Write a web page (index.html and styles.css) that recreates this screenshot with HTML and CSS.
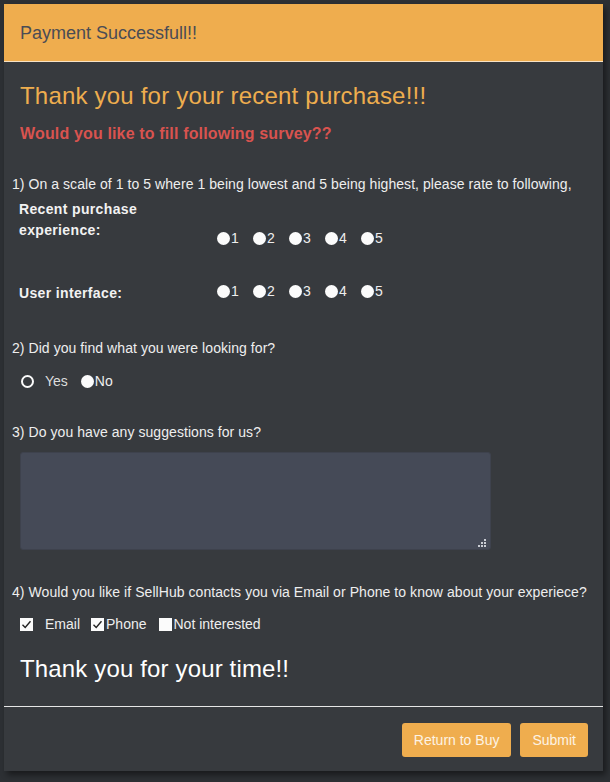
FILE: index.html
```html
<!DOCTYPE html>
<html>
<head>
<meta charset="utf-8">
<link rel="stylesheet" href="styles.css">
</head>
<body>
<div class="modal">
  <div class="modal-header">Payment Successfull!!</div>
  <div class="modal-body">
    <h2 class="thanks">Thank you for your recent purchase!!!</h2>
    <h3 class="survey">Would you like to fill following survey??</h3>

    <p class="q q1">1) On a scale of 1 to 5 where 1 being lowest and 5 being highest, please rate to following,</p>
    <div class="rate-row row-a">
      <div class="rate-label">Recent purchase<br>experience:</div>
      <div class="opts">
        <span class="opt"><span class="dot"></span>1</span>
        <span class="opt"><span class="dot"></span>2</span>
        <span class="opt"><span class="dot"></span>3</span>
        <span class="opt"><span class="dot"></span>4</span>
        <span class="opt"><span class="dot"></span>5</span>
      </div>
    </div>
    <div class="rate-row row-b">
      <div class="rate-label">User interface:</div>
      <div class="opts">
        <span class="opt"><span class="dot"></span>1</span>
        <span class="opt"><span class="dot"></span>2</span>
        <span class="opt"><span class="dot"></span>3</span>
        <span class="opt"><span class="dot"></span>4</span>
        <span class="opt"><span class="dot"></span>5</span>
      </div>
    </div>

    <p class="q q2">2) Did you find what you were looking for?</p>
    <div class="yesno">
      <span class="ring"></span><span class="yes">Yes</span>
      <span class="dot"></span><span>No</span>
    </div>

    <p class="q q3">3) Do you have any suggestions for us?</p>
    <div class="ta">
      <svg class="grip" width="10" height="10" viewBox="0 0 10 10"><g fill="#c9ccd3"><rect x="7" y="1" width="2" height="2"/><rect x="4" y="4" width="2" height="2"/><rect x="7" y="4" width="2" height="2"/><rect x="1" y="7" width="2" height="2"/><rect x="4" y="7" width="2" height="2"/><rect x="7" y="7" width="2" height="2"/></g></svg>
    </div>

    <p class="q q4">4) Would you like if SellHub contacts you via Email or Phone to know about your experiece?</p>
    <div class="checks">
      <span class="box"><svg width="13" height="13" viewBox="0 0 13 13"><path d="M2.5 6.8 L5.2 9.5 L10.5 3.2" fill="none" stroke="#222" stroke-width="1.4"/></svg></span><span class="email">Email</span>
      <span class="box"><svg width="13" height="13" viewBox="0 0 13 13"><path d="M2.5 6.8 L5.2 9.5 L10.5 3.2" fill="none" stroke="#222" stroke-width="1.4"/></svg></span><span class="phone">Phone</span>
      <span class="box"></span><span>Not interested</span>
    </div>

    <h2 class="time">Thank you for your time!!</h2>
  </div>
  <div class="modal-footer">
    <button class="btn">Return to Buy</button>
    <button class="btn">Submit</button>
  </div>
</div>
</body>
</html>
```
FILE: styles.css
```css
html, body {
  margin: 0;
  padding: 0;
}
body {
  background: #2d3034;
  font-family: "Liberation Sans", Arial, sans-serif;
  height: 782px;
  overflow: hidden;
}
.modal {
  margin: 4px 0 0 4px;
  width: 599px;
  height: 767px;
  background: #373a3e;
  box-shadow: 3px 4px 6px rgba(0,0,0,0.45);
  display: flex;
  flex-direction: column;
}
.modal-header {
  background: #efad4e;
  border-bottom: 1px solid #f7e2c4;
  padding-left: 16px;
  padding-top: 2px;
  box-sizing: border-box;
  height: 58px;
  display: flex;
  align-items: center;
  font-size: 18px;
  color: #4a4c55;
}
.modal-body {
  padding: 0 0 0 8px;
  flex: 1;
  border-bottom: 1px solid #e6e6e6;
}
.thanks {
  margin: 19px 0 0 8px;
  font-size: 24px;
  font-weight: normal;
  color: #eead4e;
  line-height: 30px;
  letter-spacing: 0.2px;
}
.survey {
  margin: 13px 0 0 8px;
  font-size: 16px;
  font-weight: bold;
  color: #d9534f;
  line-height: 20px;
  letter-spacing: 0.15px;
}
.q {
  margin: 0;
  font-size: 14px;
  color: #eeeeee;
  line-height: 18px;
  letter-spacing: 0.06px;
}
.q1 { margin-top: 31px; }
.rate-row {
  display: flex;
  align-items: flex-end;
  margin-left: 7px;
}
.row-a { margin-top: 6px; }
.row-b { margin-top: 39px; }
.rate-label {
  width: 198px;
  font-size: 14px;
  font-weight: bold;
  color: #f2f2f2;
  line-height: 21px;
  letter-spacing: 0.35px;
}
.row-a .rate-label { padding-bottom: 2px; }
.opts {
  display: flex;
  gap: 10px;
  font-size: 14px;
  color: #eeeeee;
  line-height: 18px;
}
.row-a .opts { margin-bottom: -4px; }
.row-b .opts { margin-bottom: 4px; }
.opt {
  display: inline-flex;
  align-items: center;
  width: 26px;
}
.dot {
  display: inline-block;
  width: 13px;
  height: 13px;
  border-radius: 50%;
  background: #fbfbfb;
  margin-right: 1px;
}
.q2 { margin-top: 35px; }
.yesno {
  display: flex;
  align-items: center;
  margin: 15px 0 0 9px;
  font-size: 14px;
  color: #eeeeee;
  line-height: 18px;
}
.ring {
  display: inline-block;
  width: 9px;
  height: 9px;
  border-radius: 50%;
  border: 2px solid #fbfbfb;
  margin-right: 11px;
}
.yes { margin-right: 13px; color: #dddddd; }
.q3 { margin-top: 33px; }
.ta {
  position: relative;
  margin: 11px 0 0 8px;
  width: 471px;
  height: 98px;
  background: #454a57;
  border: 1px solid #3e424d;
  border-radius: 3px;
  box-sizing: border-box;
}
.grip {
  position: absolute;
  right: 3px;
  bottom: 1px;
}
.q4 { margin-top: 33px; }
.checks {
  display: flex;
  align-items: center;
  margin: 14px 0 0 8px;
  font-size: 14px;
  color: #eeeeee;
  line-height: 18px;
}
.box {
  display: inline-block;
  width: 13px;
  height: 13px;
  background: #fbfbfb;
  margin-right: 2px;
}
.box svg { display: block; }
.email { margin-left: 10px; margin-right: 11px; }
.phone { margin-right: 12px; }
.time {
  margin: 21px 0 0 8px;
  font-size: 24px;
  font-weight: normal;
  color: #ffffff;
  line-height: 30px;
  letter-spacing: 0.15px;
}
.modal-footer {
  display: flex;
  justify-content: flex-end;
  gap: 9px;
  padding: 16px 15px 0 0;
  height: 48px;
}
.btn {
  height: 34px;
  background: #efad4e;
  color: #fdf3e4;
  border: none;
  border-radius: 3px;
  font-family: "Liberation Sans", Arial, sans-serif;
  font-size: 14px;
  padding: 0 12px;
}
```
